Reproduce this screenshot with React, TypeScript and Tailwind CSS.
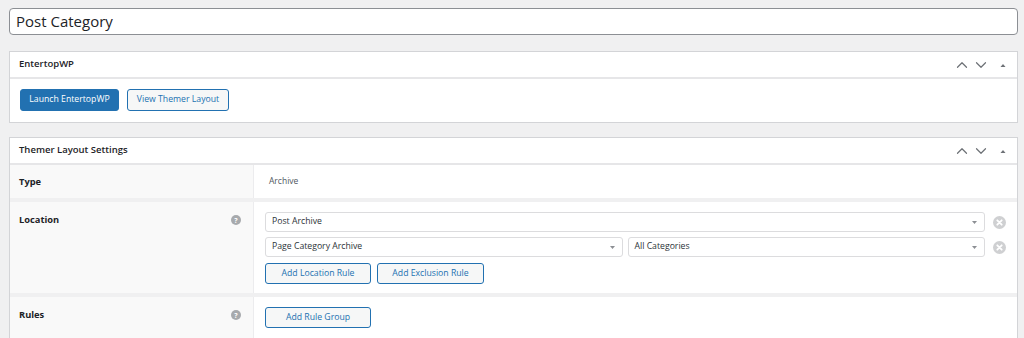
import { ChevronUp, ChevronDown } from 'lucide-react';

function HeaderIcons() {
    return (
        <div className="flex items-center gap-[1px] text-[#6d7176]">
            <ChevronUp size={18} strokeWidth={1.6} />
            <ChevronDown size={18} strokeWidth={1.6} />
            <svg width="12" height="12" viewBox="0 0 12 12" className="ml-[6px]">
                <path d="M3.5 8 L6 5 L8.5 8 Z" fill="#6d7176" />
            </svg>
        </div>
    );
}

function Panel({ title, children }: { title: string; children: React.ReactNode }) {
    return (
        <div className="bg-white border border-[#d3d4d7]">
            <div className="flex items-center justify-between h-[27px] pl-[9px] pr-[8px] border-b-2 border-[#e6e6e8]">
                <span className="text-[9.5px] font-semibold text-[#1d2327]">{title}</span>
                <HeaderIcons />
            </div>
            {children}
        </div>
    );
}

function HelpIcon() {
    return (
        <span className="flex items-center justify-center w-[10px] h-[10px] rounded-full bg-[#a7aaad] text-white text-[7px] font-bold leading-none">?</span>
    );
}

function ClearIcon() {
    return (
        <svg width="13" height="13" viewBox="0 0 13 13" className="shrink-0">
            <circle cx="6.5" cy="6.5" r="6.5" fill="#cfd0d2" />
            <path d="M4.3 4.3 L8.7 8.7 M8.7 4.3 L4.3 8.7" stroke="white" strokeWidth="1.8" strokeLinecap="round" />
        </svg>
    );
}

function Select({ value, className }: { value: string; className?: string }) {
    return (
        <div className={`flex items-center justify-between h-[20px] border border-[#dcdcde] rounded-[3px] bg-white pl-[6px] pr-[6px] ${className ?? ''}`}>
            <span className="text-[8.7px] text-[#2c3338]">{value}</span>
            <svg width="7" height="5" viewBox="0 0 7 5">
                <path d="M1 1 L6 1 L3.5 4 Z" fill="#8c8f94" />
            </svg>
        </div>
    );
}

function OutlineButton({ label, width }: { label: string; width: string }) {
    return (
        <button className={`h-[21px] ${width} border border-[#2271b1] rounded-[3px] bg-[#f6f7f7] text-[#2271b1] text-[8.7px]`}>
            {label}
        </button>
    );
}

function SettingRow({ label, help, children, labelPad }: { label: string; help?: boolean; children: React.ReactNode; labelPad: string }) {
    return (
        <div className="grid grid-cols-[244px_1fr]">
            <div className={`bg-[#f9f9f9] border-r border-[#ececee] flex items-start justify-between pl-[9px] pr-[12px] ${labelPad}`}>
                <span className="text-[9.3px] font-bold text-[#1d2327]">{label}</span>
                {help && <span className="mt-[2px]"><HelpIcon /></span>}
            </div>
            <div className="bg-white">{children}</div>
        </div>
    );
}

export default function App() {
    return (
        <div className="h-[338px] bg-[#f0f0f1] pt-[8px] pl-[9px] pr-[6px] overflow-hidden" style={{ fontFamily: '"Open Sans", "Noto Sans", sans-serif' }}>
            <div className="h-[27px] bg-white border border-[#8c8f94] rounded-[4px] flex items-center pl-[6px]">
                <span className="text-[15px] text-[#1d2327]">Post Category</span>
            </div>

            <div className="mt-[16px]">
                <Panel title="EntertopWP">
                    <div className="flex gap-[8px] px-[10px] pt-[10px] pb-[11px]">
                        <button className="h-[22px] w-[99px] rounded-[3px] bg-[#2271b1] border border-[#2271b1] text-white text-[8.7px]">
                            Launch EntertopWP
                        </button>
                        <button className="h-[22px] w-[102px] rounded-[3px] bg-[#f6f7f7] border border-[#2271b1] text-[#2271b1] text-[8.7px]">
                            View Themer Layout
                        </button>
                    </div>
                </Panel>
            </div>

            <div className="mt-[14px]">
                <Panel title="Themer Layout Settings">
                    <div className="flex flex-col gap-[4px] bg-[#f0f0f1]">
                        <SettingRow label="Type" labelPad="pt-[10px] h-[33px]">
                            <div className="h-[33px] flex items-center pl-[15px] text-[8.5px] text-[#50575e]">Archive</div>
                        </SettingRow>

                        <SettingRow label="Location" help labelPad="pt-[11px]">
                            <div className="flex flex-col gap-[5px] pl-[11px] pr-[11px] pt-[10px] pb-[9px]">
                                <div className="flex items-center gap-[8px]">
                                    <Select value="Post Archive" className="flex-1" />
                                    <ClearIcon />
                                </div>
                                <div className="flex items-center gap-[8px]">
                                    <div className="flex-1 flex gap-[5px]">
                                        <Select value="Page Category Archive" className="flex-1" />
                                        <Select value="All Categories" className="flex-1" />
                                    </div>
                                    <ClearIcon />
                                </div>
                                <div className="flex gap-[6px] mt-[1px]">
                                    <OutlineButton label="Add Location Rule" width="w-[106px]" />
                                    <OutlineButton label="Add Exclusion Rule" width="w-[107px]" />
                                </div>
                            </div>
                        </SettingRow>

                        <SettingRow label="Rules" help labelPad="pt-[11px] h-[60px]">
                            <div className="flex items-start pl-[11px] pt-[10px] h-[60px]">
                                <OutlineButton label="Add Rule Group" width="w-[106px]" />
                            </div>
                        </SettingRow>
                    </div>
                </Panel>
            </div>
        </div>
    );
}
